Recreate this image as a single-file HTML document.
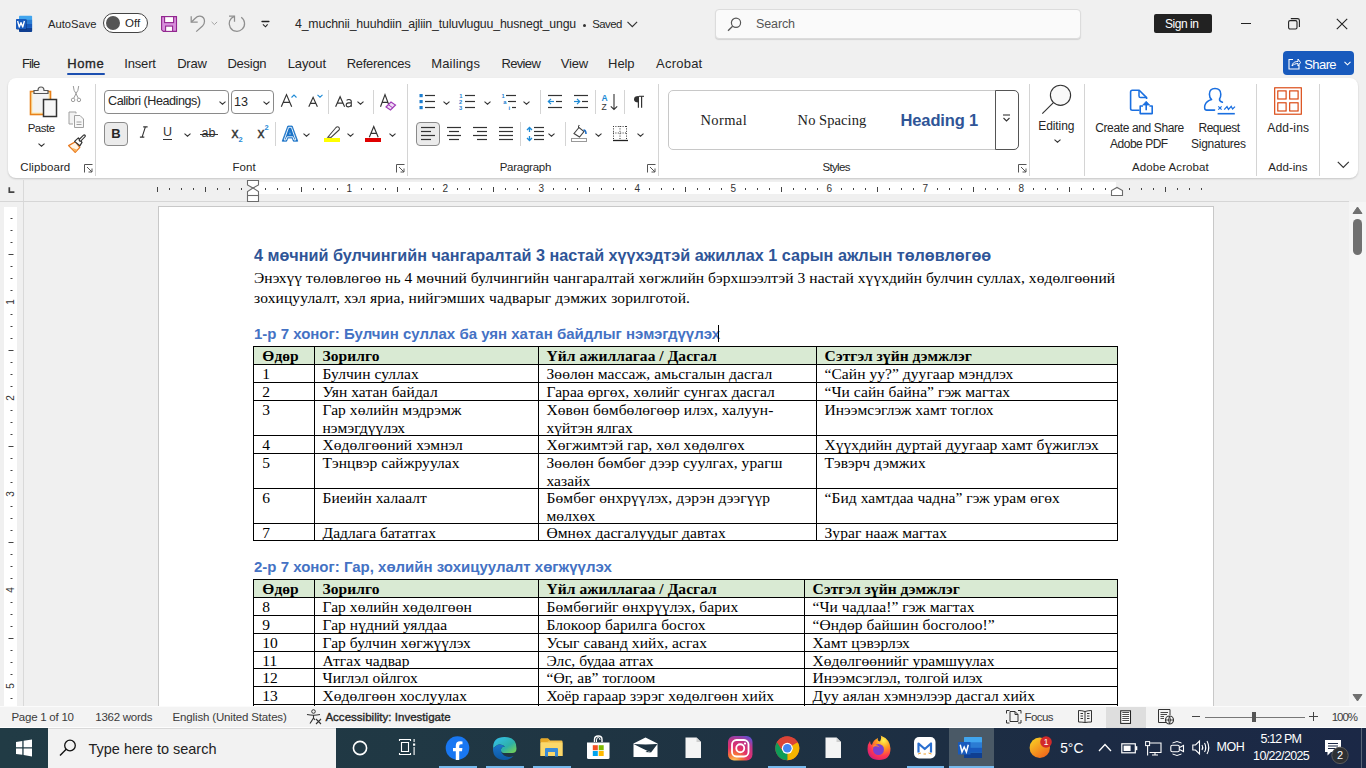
<!DOCTYPE html><html><head><meta charset="utf-8"><style>
*{margin:0;padding:0;box-sizing:border-box}
html,body{width:1366px;height:768px;overflow:hidden;background:#f0f0f0;font-family:"Liberation Sans",sans-serif}
.a{position:absolute}
.t{position:absolute;white-space:nowrap;line-height:1}
svg{position:absolute;overflow:visible}
</style></head><body>
<svg style="left:16px;top:15px" width="17" height="18" viewBox="0 0 17 18">
<rect x="3" y="0.8" width="13.1" height="16.1" rx="0.8" fill="#41a5ee"/>
<rect x="3" y="4.8" width="13.1" height="4.1" fill="#2b7cd3"/>
<rect x="3" y="8.9" width="13.1" height="4" fill="#185abd"/>
<path d="M3 12.9 H16.1 V16.1 Q16.1 16.9 15.3 16.9 H3.8 Q3 16.9 3 16.1 Z" fill="#103f91"/>
<rect x="0.6" y="4.5" width="10.4" height="10.4" fill="#0b3275" opacity="0.5"/>
<rect x="0" y="3.9" width="10" height="10.1" rx="0.6" fill="#185abd"/>
<path d="M1.6 6 L3.3 12 L5 7.6 L6.7 12 L8.4 6" stroke="#fff" stroke-width="1.35" fill="none" stroke-linejoin="round"/>
</svg>
<div class="t" style="left:48px;top:18.52px;font-size:11.2px;color:#262626;font-weight:normal;font-family:'Liberation Sans', sans-serif;letter-spacing:0.000px;">AutoSave</div>
<div class="a" style="left:103px;top:13px;width:45px;height:20px;border:1px solid #444;border-radius:10px;background:#fff"></div>
<div class="a" style="left:106px;top:16px;width:14px;height:14px;border-radius:7px;background:#555"></div>
<div class="t" style="left:125px;top:18.27px;font-size:11.5px;color:#262626;font-weight:normal;font-family:'Liberation Sans', sans-serif;letter-spacing:0.000px;">Off</div>
<svg style="left:161px;top:16px" width="17" height="17" viewBox="0 0 17 17">
<path d="M0.6 0.6 H15.5 V15.4 H2.3 L0.6 13.8 Z" fill="#d88fdc" stroke="#92278f" stroke-width="1.1"/>
<rect x="3.6" y="0.6" width="9" height="6" fill="#fff" stroke="#92278f" stroke-width="1.1"/>
<rect x="4.6" y="10.1" width="7" height="5.3" fill="#fff" stroke="#92278f" stroke-width="1.1"/>
</svg>
<svg style="left:184px;top:14px" width="36" height="20" viewBox="0 0 36 20">
<path d="M7.2 2.2 V8.2 H13.7" stroke="#8f8f8f" stroke-width="1.25" fill="none"/>
<path d="M7.5 8 L11 4.5 Q13.5 2 16 2.2 Q20.5 2.8 20.5 7.3 Q20.5 10 18.5 12 L12.2 17.6" stroke="#8f8f8f" stroke-width="1.25" fill="none"/>
<path d="M27.6 7.9 L30.4 10.6 L33.1 7.9" stroke="#9a9a9a" stroke-width="0.9" fill="none"/>
</svg>
<svg style="left:227px;top:14px" width="20" height="20" viewBox="0 0 20 20">
<path d="M7.5 7.7 V2.2 H2" stroke="#8f8f8f" stroke-width="1.25" fill="none"/>
<path d="M14.2 3.2 A7.7 7.7 0 1 1 7.3 2.3" stroke="#8f8f8f" stroke-width="1.25" fill="none"/>
</svg>
<svg style="left:260px;top:18px" width="12" height="12" viewBox="0 0 12 12">
<path d="M2 3.5 H8.9" stroke="#222" stroke-width="1.3" stroke-linecap="round"/><path d="M2.9 6.4 L5.5 8.8 L7.6 6.4" stroke="#222" stroke-width="1.1" fill="none"/>
</svg>
<div class="t" style="left:295px;top:18.29px;font-size:12.3px;color:#262626;font-weight:normal;font-family:'Liberation Sans', sans-serif;letter-spacing:-0.153px;">4_muchnii_huuhdiin_ajliin_tuluvluguu_husnegt_ungu</div>
<div class="a" style="left:582.5px;top:23.7px;width:3.5px;height:3.5px;border-radius:2px;background:#333"></div>
<div class="t" style="left:592.2px;top:19.25px;font-size:11.4px;color:#262626;font-weight:normal;font-family:'Liberation Sans', sans-serif;letter-spacing:-0.549px;">Saved</div>
<svg style="left:627px;top:21px" width="11" height="7" viewBox="0 0 11 7"><path d="M0.5 0.8 L5.3 5.6 L10.1 0.8" stroke="#333" stroke-width="1.2" fill="none"/></svg>
<div class="a" style="left:715px;top:9px;width:366px;height:30px;background:#fafafa;border:1px solid #dcdcdc;border-radius:4px;box-shadow:0 1px 1px rgba(0,0,0,0.12)"></div>
<svg style="left:727px;top:17px" width="15" height="15" viewBox="0 0 15 15"><circle cx="9" cy="5.8" r="4.6" stroke="#555" stroke-width="1.2" fill="none"/><path d="M5.6 9.2 L1 13.8" stroke="#555" stroke-width="1.3"/></svg>
<div class="t" style="left:756px;top:17.92px;font-size:12.5px;color:#555;font-weight:normal;font-family:'Liberation Sans', sans-serif;letter-spacing:-0.121px;">Search</div>
<div class="a" style="left:1154px;top:14px;width:58px;height:19px;background:#222;border-radius:2px"></div>
<div class="t" style="left:1165px;top:18.34px;font-size:12px;color:#fff;font-weight:normal;font-family:'Liberation Sans', sans-serif;letter-spacing:-0.449px;">Sign in</div>
<div class="a" style="left:1241px;top:23px;width:10px;height:1px;background:#222"></div>
<svg style="left:1288px;top:18px" width="12" height="12" viewBox="0 0 12 12"><rect x="0.6" y="2.6" width="8.4" height="8.4" rx="1.5" stroke="#222" stroke-width="1.1" fill="none"/><path d="M2.8 0.6 H9.5 Q11.4 0.6 11.4 2.5 V9" stroke="#222" stroke-width="1.1" fill="none"/></svg>
<svg style="left:1336px;top:18px" width="12" height="12" viewBox="0 0 12 12"><path d="M0.8 0.8 L11.2 11.2 M11.2 0.8 L0.8 11.2" stroke="#222" stroke-width="1.1"/></svg>
<div class="t" style="left:22px;top:56.90px;font-size:13px;color:#262626;font-weight:normal;font-family:'Liberation Sans', sans-serif;letter-spacing:-0.916px;">File</div>
<div class="t" style="left:67.3px;top:56.90px;font-size:13px;color:#262626;font-weight:normal;font-family:'Liberation Sans', sans-serif;letter-spacing:0.574px;-webkit-text-stroke:0.35px currentColor;">Home</div>
<div class="t" style="left:124.3px;top:56.90px;font-size:13px;color:#262626;font-weight:normal;font-family:'Liberation Sans', sans-serif;letter-spacing:-0.183px;">Insert</div>
<div class="t" style="left:177.2px;top:56.90px;font-size:13px;color:#262626;font-weight:normal;font-family:'Liberation Sans', sans-serif;letter-spacing:-0.212px;">Draw</div>
<div class="t" style="left:227.4px;top:56.90px;font-size:13px;color:#262626;font-weight:normal;font-family:'Liberation Sans', sans-serif;letter-spacing:-0.253px;">Design</div>
<div class="t" style="left:287.8px;top:56.90px;font-size:13px;color:#262626;font-weight:normal;font-family:'Liberation Sans', sans-serif;letter-spacing:-0.166px;">Layout</div>
<div class="t" style="left:346.7px;top:56.90px;font-size:13px;color:#262626;font-weight:normal;font-family:'Liberation Sans', sans-serif;letter-spacing:-0.275px;">References</div>
<div class="t" style="left:431.3px;top:56.90px;font-size:13px;color:#262626;font-weight:normal;font-family:'Liberation Sans', sans-serif;letter-spacing:0.131px;">Mailings</div>
<div class="t" style="left:501.4px;top:56.90px;font-size:13px;color:#262626;font-weight:normal;font-family:'Liberation Sans', sans-serif;letter-spacing:-0.645px;">Review</div>
<div class="t" style="left:560.8px;top:56.90px;font-size:13px;color:#262626;font-weight:normal;font-family:'Liberation Sans', sans-serif;letter-spacing:-0.214px;">View</div>
<div class="t" style="left:608.1px;top:56.90px;font-size:13px;color:#262626;font-weight:normal;font-family:'Liberation Sans', sans-serif;letter-spacing:-0.079px;">Help</div>
<div class="t" style="left:656.1px;top:56.90px;font-size:13px;color:#262626;font-weight:normal;font-family:'Liberation Sans', sans-serif;letter-spacing:0.216px;">Acrobat</div>
<div class="a" style="left:67px;top:73px;width:38px;height:2px;background:#1c4fb0;border-radius:1px"></div>
<div class="a" style="left:1283px;top:51px;width:71px;height:24px;background:#185abd;border-radius:4px"></div>
<svg style="left:1288px;top:57px" width="13" height="13" viewBox="0 0 13 13"><path d="M5 2.5 H1 V12 H11 V8" stroke="#fff" stroke-width="1.1" fill="none"/><path d="M4 9 C4.5 5.5 7 4.5 10 4.5 V2 L12.5 5.5 L10 9 V6.5 C7.5 6.5 5.5 7.5 4 9 Z" stroke="#fff" stroke-width="1" fill="none"/></svg>
<div class="t" style="left:1304.3px;top:57.50px;font-size:13px;color:#fff;font-weight:normal;font-family:'Liberation Sans', sans-serif;letter-spacing:-0.597px;">Share</div>
<svg style="left:1344px;top:61px" width="7" height="5" viewBox="0 0 7 5"><path d="M0.5 0.8 L3.5 3.8 L6.5 0.8" stroke="#fff" stroke-width="1.1" fill="none"/></svg>
<div class="a" style="left:8px;top:78px;width:1350px;height:100px;background:#fff;border-radius:8px;box-shadow:0 1px 2px rgba(0,0,0,0.18)"></div>
<svg style="left:29px;top:86px" width="30" height="32" viewBox="0 0 30 32">
<rect x="1.5" y="5.5" width="20" height="23" fill="#fde9b0" stroke="#e8811a" stroke-width="1.6"/>
<rect x="3.5" y="6.5" width="16" height="20" fill="#f3f3f3"/>
<path d="M5 7.5 V4.5 H9 Q9 1 12 1 Q15 1 15 4.5 H19 V7.5 Z" fill="#f3f3f3" stroke="#555" stroke-width="1.2"/>
<rect x="14.5" y="13.5" width="13" height="17" fill="#f7f7f7" stroke="#333" stroke-width="1.5"/>
</svg>
<div class="t" style="left:27.7px;top:122.87px;font-size:11.5px;color:#262626;font-weight:normal;font-family:'Liberation Sans', sans-serif;letter-spacing:-0.502px;">Paste</div>
<svg style="left:38px;top:143px" width="7" height="5" viewBox="0 0 7 5"><path d="M0.5 0.7 L3.5 3.2 L6.5 0.7" stroke="#333" stroke-width="1.1" fill="none"/></svg>
<svg style="left:0px;top:0px" width="1366" height="200" viewBox="0 0 1366 200"><path d="M73.3 86 Q73.6 91 76 93.6 L78.2 98.1 M78.7 86 Q78.4 91 76 93.6 L73.8 98.1" stroke="#9a9a9a" stroke-width="1" fill="none"/><circle cx="73.1" cy="99.9" r="1.75" stroke="#9a9a9a" stroke-width="1" fill="none"/><circle cx="78.9" cy="99.9" r="1.75" stroke="#9a9a9a" stroke-width="1" fill="none"/></svg>
<svg style="left:68px;top:111px" width="17" height="18" viewBox="0 0 17 18">
<path d="M8 2.5 V1 H1 V13 H5" stroke="#a0a0a0" stroke-width="1" fill="#f2f2f2"/>
<path d="M6.5 4.5 H12 L15.5 8 V16.5 H6.5 Z" stroke="#a0a0a0" stroke-width="1" fill="#f7f7f7"/>
<path d="M8.5 11 H13.5 M8.5 13.5 H13.5" stroke="#a0a0a0" stroke-width="1"/>
</svg>
<svg style="left:0px;top:0px" width="1366" height="200" viewBox="0 0 1366 200"><path d="M68.6 145.6 L75.4 141.8 L79.8 147.4 L75.2 152.4 Z" fill="#fff4e6" stroke="#e8761a" stroke-width="1.3" stroke-linejoin="round"/><path d="M71.2 147.6 L77.4 149.8 L75.2 152 Z" fill="#f9b25a"/><path d="M74.6 141.4 L78.4 137.9 L82 142.4 L79.8 145.8 Z" fill="#fff" stroke="#333" stroke-width="1.2" stroke-linejoin="round"/><path d="M80.2 140 L84.3 135.9" stroke="#333" stroke-width="3.2" stroke-linecap="round"/><path d="M80.4 139.8 L84.1 136.1" stroke="#fff" stroke-width="1.1" stroke-linecap="round"/></svg>
<div class="t" style="left:20.3px;top:162.07px;font-size:11.5px;color:#262626;font-weight:normal;font-family:'Liberation Sans', sans-serif;letter-spacing:0.085px;">Clipboard</div>
<svg style="left:83.5px;top:163.5px" width="9" height="9" viewBox="0 0 9 9"><path d="M0.5 8.5 V0.5 H8.5" stroke="#555" stroke-width="1" fill="none"/><path d="M3 3 L8 8 M8 4.5 V8 H4.5" stroke="#555" stroke-width="1" fill="none"/></svg>
<div class="a" style="left:95px;top:84px;width:1px;height:92px;background:#d4d4d4"></div>
<div class="a" style="left:104px;top:90px;width:125px;height:24px;border:1px solid #8a8a8a;border-radius:4px;background:#fff"></div>
<div class="t" style="left:108px;top:95.43px;font-size:12.6px;color:#262626;font-weight:normal;font-family:'Liberation Sans', sans-serif;letter-spacing:-0.458px;">Calibri (Headings)</div>
<svg style="left:219px;top:101px" width="7" height="5" viewBox="0 0 7 5"><path d="M0.5 0.7 L3.5 3.2 L6.5 0.7" stroke="#333" stroke-width="1.1" fill="none"/></svg>
<div class="a" style="left:231px;top:90px;width:43px;height:24px;border:1px solid #8a8a8a;border-radius:4px;background:#fff"></div>
<div class="t" style="left:234px;top:95.53px;font-size:12.6px;color:#262626;font-weight:normal;font-family:'Liberation Sans', sans-serif;letter-spacing:0.000px;">13</div>
<svg style="left:263px;top:101px" width="7" height="5" viewBox="0 0 7 5"><path d="M0.5 0.7 L3.5 3.2 L6.5 0.7" stroke="#333" stroke-width="1.1" fill="none"/></svg>
<svg style="left:0px;top:0px" width="1366" height="200" viewBox="0 0 1366 200"><path d="M281.30 106.80 L286.50 94.60 L291.70 106.80 M283.17 102.41 H289.83" stroke="#333" stroke-width="1.15" fill="none" stroke-linejoin="miter"/><path d="M308.80 106.80 L313.10 97.30 L317.40 106.80 M310.35 103.38 H315.85" stroke="#333" stroke-width="1.15" fill="none" stroke-linejoin="miter"/><path d="M335.60 106.80 L340.10 96.70 L344.60 106.80 M337.22 103.16 H342.98" stroke="#333" stroke-width="1.15" fill="none" stroke-linejoin="miter"/><path d="M380.50 106.80 L385.00 94.60 L389.50 106.80 M382.12 102.41 H387.88" stroke="#333" stroke-width="1.15" fill="none" stroke-linejoin="miter"/><path d="M369.30 137.30 L373.75 126.50 L378.20 137.30 M370.90 133.41 H376.60" stroke="#333" stroke-width="1.15" fill="none" stroke-linejoin="miter"/><path d="M346.6 100.3 Q347.5 99.5 349 99.5 Q351.3 99.5 351.3 101.8 V106.8 M351.3 102.9 H348.6 Q346.2 102.9 346.2 105 Q346.2 106.9 348.3 106.9 Q350.6 106.9 351.3 104.8" stroke="#333" stroke-width="1.1" fill="none"/></svg>
<svg style="left:291px;top:94px" width="7" height="4" viewBox="0 0 7 4"><path d="M0.5 3.5 L3 1 L5.5 3.5" stroke="#1e8ad6" stroke-width="1.1" fill="none"/></svg>
<svg style="left:317px;top:94px" width="7" height="4" viewBox="0 0 7 4"><path d="M0.5 0.8 L3 3.2 L5.5 0.8" stroke="#1e8ad6" stroke-width="1.1" fill="none"/></svg>
<div class="a" style="left:328px;top:90px;width:1px;height:24px;background:#d4d4d4"></div>
<svg style="left:357px;top:101px" width="7" height="5" viewBox="0 0 7 5"><path d="M0.5 0.7 L3.5 3.2 L6.5 0.7" stroke="#333" stroke-width="1.1" fill="none"/></svg>
<div class="a" style="left:373px;top:90px;width:1px;height:24px;background:#d4d4d4"></div>
<svg style="left:385px;top:100px" width="12" height="11" viewBox="0 0 12 11"><path d="M1 7 L6 2 L10.5 5 L5.5 10 Z" stroke="#a03cb8" stroke-width="1.2" fill="#f0dcf5"/><path d="M3.3 4.7 L8 8" stroke="#a03cb8" stroke-width="1"/></svg>
<div class="a" style="left:104px;top:122px;width:24px;height:24px;border:1px solid #8a8a8a;border-radius:4px;background:#ebebeb"></div>
<div class="t" style="left:111.3px;top:127.00px;font-size:13px;color:#262626;font-weight:bold;font-family:'Liberation Sans', sans-serif;letter-spacing:0.000px;">B</div>
<svg style="left:0px;top:0px" width="1366" height="200" viewBox="0 0 1366 200"><path d="M143.2 126.9 H147.6 M139.9 137.1 H144.3 M145.4 126.9 L142.1 137.1" stroke="#333" stroke-width="1.1" fill="none"/></svg>
<div class="t" style="left:163px;top:126.42px;font-size:12.5px;color:#333;font-weight:normal;font-family:'Liberation Sans', sans-serif;letter-spacing:0.000px;">U</div>
<div class="a" style="left:163px;top:139px;width:9px;height:1px;background:#333"></div>
<svg style="left:184px;top:133px" width="7" height="5" viewBox="0 0 7 5"><path d="M0.5 0.7 L3.5 3.2 L6.5 0.7" stroke="#333" stroke-width="1.1" fill="none"/></svg>
<div class="t" style="left:201.5px;top:126.92px;font-size:12.5px;color:#333;font-weight:normal;font-family:'Liberation Sans', sans-serif;letter-spacing:0.000px;">ab</div>
<div class="a" style="left:200px;top:134px;width:18px;height:1px;background:#333"></div>
<div class="t" style="left:231.5px;top:125.65px;font-size:14px;color:#333;font-weight:normal;font-family:'Liberation Sans', sans-serif;letter-spacing:0.000px;-webkit-text-stroke:0.35px currentColor;">x</div>
<div class="t" style="left:238.5px;top:135.65px;font-size:7.5px;color:#1e8ad6;font-weight:bold;font-family:'Liberation Sans', sans-serif;letter-spacing:0.000px;">2</div>
<div class="t" style="left:257.5px;top:125.65px;font-size:14px;color:#333;font-weight:normal;font-family:'Liberation Sans', sans-serif;letter-spacing:0.000px;-webkit-text-stroke:0.35px currentColor;">x</div>
<div class="t" style="left:264.5px;top:123.65px;font-size:7.5px;color:#1e8ad6;font-weight:bold;font-family:'Liberation Sans', sans-serif;letter-spacing:0.000px;">2</div>
<div class="a" style="left:275px;top:122px;width:1px;height:24px;background:#d4d4d4"></div>
<svg style="left:281px;top:125px" width="18" height="18" viewBox="0 0 18 18"><path d="M1.2 16.2 L6.8 1 H11.2 L16.8 16.2 H12.3 L11.2 13 H6.8 L5.7 16.2 Z M7.8 9.8 H10.2 L9 6 Z" fill="#1a73c8" stroke="#1a73c8" stroke-width="0.8" stroke-linejoin="round"/><path d="M3.2 15 L7.6 2.3 H10.4 L14.8 15 H13 L11.9 11.8 H6.1 L5 15 Z" fill="none" stroke="#fff" stroke-width="0.9" stroke-linejoin="round"/></svg>
<svg style="left:303px;top:133px" width="7" height="5" viewBox="0 0 7 5"><path d="M0.5 0.7 L3.5 3.2 L6.5 0.7" stroke="#333" stroke-width="1.1" fill="none"/></svg>
<svg style="left:324px;top:125px" width="18" height="18" viewBox="0 0 18 18"><path d="M4 12 L12 2.5 Q13.5 1 15 2.5 Q16 4 15 5 L7 12.5 Z" fill="#fff" stroke="#444" stroke-width="1.1"/><path d="M4 12 L2.5 13 L5 13.5 L7 12.5 Z" fill="#666"/><rect x="0" y="13" width="16" height="4" fill="#ffff00"/></svg>
<svg style="left:347px;top:133px" width="7" height="5" viewBox="0 0 7 5"><path d="M0.5 0.7 L3.5 3.2 L6.5 0.7" stroke="#333" stroke-width="1.1" fill="none"/></svg>
<div class="a" style="left:365px;top:138px;width:16px;height:4px;background:#e00000"></div>
<svg style="left:389px;top:133px" width="7" height="5" viewBox="0 0 7 5"><path d="M0.5 0.7 L3.5 3.2 L6.5 0.7" stroke="#333" stroke-width="1.1" fill="none"/></svg>
<div class="t" style="left:232.5px;top:162.07px;font-size:11.5px;color:#262626;font-weight:normal;font-family:'Liberation Sans', sans-serif;letter-spacing:0.096px;">Font</div>
<svg style="left:395.5px;top:163.5px" width="9" height="9" viewBox="0 0 9 9"><path d="M0.5 8.5 V0.5 H8.5" stroke="#555" stroke-width="1" fill="none"/><path d="M3 3 L8 8 M8 4.5 V8 H4.5" stroke="#555" stroke-width="1" fill="none"/></svg>
<div class="a" style="left:407px;top:84px;width:1px;height:92px;background:#d4d4d4"></div>
<svg style="left:419px;top:93px" width="18" height="18" viewBox="0 0 18 18"><rect x="0.5" y="1" width="3.2" height="3.2" fill="#1e7fd0"/><rect x="0.5" y="7" width="3.2" height="3.2" fill="#1e7fd0"/><rect x="0.5" y="13" width="3.2" height="3.2" fill="#1e7fd0"/><path d="M6 2.5 H16" stroke="#333" stroke-width="1.2"/><path d="M6 8.5 H16" stroke="#333" stroke-width="1.2"/><path d="M6 14.5 H16" stroke="#333" stroke-width="1.2"/></svg>
<svg style="left:443px;top:101px" width="7" height="5" viewBox="0 0 7 5"><path d="M0.5 0.7 L3.5 3.2 L6.5 0.7" stroke="#333" stroke-width="1.1" fill="none"/></svg>
<svg style="left:459px;top:93px" width="18" height="18" viewBox="0 0 18 18"><text x="0.3" y="5.3" font-size="5.8" font-weight="bold" fill="#1e7fd0" font-family="Liberation Sans">1</text><text x="0" y="11.3" font-size="5.8" font-weight="bold" fill="#1e7fd0" font-family="Liberation Sans">2</text><text x="0" y="17.3" font-size="5.8" font-weight="bold" fill="#1e7fd0" font-family="Liberation Sans">3</text><path d="M6 2.5 H16" stroke="#333" stroke-width="1.2"/><path d="M6 8.5 H16" stroke="#333" stroke-width="1.2"/><path d="M6 14.5 H16" stroke="#333" stroke-width="1.2"/></svg>
<svg style="left:484px;top:101px" width="7" height="5" viewBox="0 0 7 5"><path d="M0.5 0.7 L3.5 3.2 L6.5 0.7" stroke="#333" stroke-width="1.1" fill="none"/></svg>
<svg style="left:500px;top:93px" width="18" height="18" viewBox="0 0 18 18"><text x="1.5" y="5.3" font-size="5.8" font-weight="bold" fill="#1e7fd0" font-family="Liberation Sans">1</text><text x="3.2" y="11.3" font-size="5.8" font-weight="bold" fill="#1e7fd0" font-family="Liberation Sans">a</text><text x="8.5" y="17.3" font-size="5.8" font-weight="bold" fill="#1e7fd0" font-family="Liberation Sans">i</text><path d="M6 2.5 H16" stroke="#333" stroke-width="1.2"/><path d="M8 8.5 H16" stroke="#333" stroke-width="1.2"/><path d="M12 14.5 H16" stroke="#333" stroke-width="1.2"/></svg>
<svg style="left:523px;top:101px" width="7" height="5" viewBox="0 0 7 5"><path d="M0.5 0.7 L3.5 3.2 L6.5 0.7" stroke="#333" stroke-width="1.1" fill="none"/></svg>
<div class="a" style="left:540px;top:90px;width:1px;height:24px;background:#d4d4d4"></div>
<svg style="left:547px;top:93px" width="17" height="17" viewBox="0 0 17 17"><path d="M1 2.5 H15" stroke="#333" stroke-width="1.2"/><path d="M9 8.5 H15" stroke="#333" stroke-width="1.2"/><path d="M1 14.5 H15" stroke="#333" stroke-width="1.2"/><path d="M1.5 8.5 H7" stroke="#1e8ad6" stroke-width="1.2"/><path d="M4 5.8 L1.3 8.5 L4 11.2" stroke="#1e8ad6" stroke-width="1.2" fill="none"/></svg>
<svg style="left:573px;top:93px" width="17" height="17" viewBox="0 0 17 17"><path d="M1 2.5 H15" stroke="#333" stroke-width="1.2"/><path d="M9 8.5 H15" stroke="#333" stroke-width="1.2"/><path d="M1 14.5 H15" stroke="#333" stroke-width="1.2"/><path d="M1 8.5 H6.5" stroke="#1e8ad6" stroke-width="1.2"/><path d="M4 5.8 L6.7 8.5 L4 11.2" stroke="#1e8ad6" stroke-width="1.2" fill="none"/></svg>
<div class="a" style="left:595px;top:90px;width:1px;height:24px;background:#d4d4d4"></div>
<svg style="left:601px;top:93px" width="18" height="18" viewBox="0 0 18 18"><text x="0.5" y="8.3" font-size="8.5" font-weight="bold" fill="#1e8ad6" font-family="Liberation Sans">A</text><text x="0.5" y="17" font-size="8.5" fill="#333" font-family="Liberation Sans">Z</text><path d="M13 1 V16.5 M9.8 13.3 L13 16.5 L16.2 13.3" stroke="#333" stroke-width="1.1" fill="none"/></svg>
<div class="a" style="left:624px;top:90px;width:1px;height:24px;background:#d4d4d4"></div>
<svg style="left:633px;top:95px" width="12" height="14" viewBox="0 0 12 14"><path d="M6 1.3 H11" stroke="#333" stroke-width="1.1"/><path d="M5.4 1.3 V12.8 M8.6 1.3 V12.8" stroke="#333" stroke-width="1.2"/><path d="M5.6 1 Q1 1 1 4.3 Q1 7.6 5.6 7.6 Z" fill="#333"/></svg>
<div class="a" style="left:416px;top:122px;width:24px;height:24px;border:1px solid #8a8a8a;border-radius:4px;background:#ebebeb"></div>
<svg style="left:420px;top:126px" width="17" height="16" viewBox="0 0 17 16"><path d="M1 1.5 H15" stroke="#333" stroke-width="1.2"/><path d="M1 5.5 H11" stroke="#333" stroke-width="1.2"/><path d="M1 9.5 H15" stroke="#333" stroke-width="1.2"/><path d="M1 13.5 H11" stroke="#333" stroke-width="1.2"/></svg>
<svg style="left:446px;top:126px" width="17" height="16" viewBox="0 0 17 16"><path d="M1 1.5 H15" stroke="#333" stroke-width="1.2"/><path d="M3 5.5 H13" stroke="#333" stroke-width="1.2"/><path d="M1 9.5 H15" stroke="#333" stroke-width="1.2"/><path d="M3 13.5 H13" stroke="#333" stroke-width="1.2"/></svg>
<svg style="left:472px;top:126px" width="17" height="16" viewBox="0 0 17 16"><path d="M1 1.5 H15" stroke="#333" stroke-width="1.2"/><path d="M5 5.5 H15" stroke="#333" stroke-width="1.2"/><path d="M1 9.5 H15" stroke="#333" stroke-width="1.2"/><path d="M5 13.5 H15" stroke="#333" stroke-width="1.2"/></svg>
<svg style="left:498px;top:126px" width="17" height="16" viewBox="0 0 17 16"><path d="M1 1.5 H15" stroke="#333" stroke-width="1.2"/><path d="M1 5.5 H15" stroke="#333" stroke-width="1.2"/><path d="M1 9.5 H15" stroke="#333" stroke-width="1.2"/><path d="M1 13.5 H15" stroke="#333" stroke-width="1.2"/></svg>
<div class="a" style="left:520px;top:122px;width:1px;height:24px;background:#d4d4d4"></div>
<svg style="left:526px;top:126px" width="19" height="16" viewBox="0 0 19 16"><path d="M8 1.5 H18" stroke="#333" stroke-width="1.2"/><path d="M8 5.5 H18" stroke="#333" stroke-width="1.2"/><path d="M8 9.5 H18" stroke="#333" stroke-width="1.2"/><path d="M8 13.5 H18" stroke="#333" stroke-width="1.2"/><path d="M3.5 1.5 V6 M3.5 10 V14.5 M1 4 L3.5 1.5 L6 4 M1 12 L3.5 14.5 L6 12" stroke="#1e8ad6" stroke-width="1.3" fill="none"/></svg>
<svg style="left:548.3px;top:133px" width="7" height="5" viewBox="0 0 7 5"><path d="M0.5 0.7 L3.5 3.2 L6.5 0.7" stroke="#333" stroke-width="1.1" fill="none"/></svg>
<div class="a" style="left:565px;top:122px;width:1px;height:24px;background:#d4d4d4"></div>
<svg style="left:571px;top:125px" width="18" height="18" viewBox="0 0 18 18"><path d="M3 8.5 L8 2.5 L13 6.5 L8.5 12 Z" stroke="#444" stroke-width="1.1" fill="#fff"/><path d="M7.5 3 V1 Q7.5 0 8.5 0.5" stroke="#444" stroke-width="1" fill="none"/><path d="M12.5 5 Q15 5 15 9" stroke="#1e6fc8" stroke-width="1.6" fill="none"/><rect x="0.5" y="13.5" width="15" height="3" stroke="#999" stroke-width="1" fill="#fff"/></svg>
<svg style="left:595px;top:133px" width="7" height="5" viewBox="0 0 7 5"><path d="M0.5 0.7 L3.5 3.2 L6.5 0.7" stroke="#333" stroke-width="1.1" fill="none"/></svg>
<svg style="left:612px;top:125px" width="17" height="17" viewBox="0 0 17 17"><path d="M1 1.5 H15 M1 8 H15 M1.5 1 V15 M8 1 V15 M14.5 1 V15" stroke="#333" stroke-width="1" stroke-dasharray="1 1.4" fill="none"/><path d="M1 15.5 H16" stroke="#222" stroke-width="1.3"/></svg>
<svg style="left:637px;top:133px" width="7" height="5" viewBox="0 0 7 5"><path d="M0.5 0.7 L3.5 3.2 L6.5 0.7" stroke="#333" stroke-width="1.1" fill="none"/></svg>
<div class="t" style="left:499.7px;top:162.07px;font-size:11.5px;color:#262626;font-weight:normal;font-family:'Liberation Sans', sans-serif;letter-spacing:-0.263px;">Paragraph</div>
<svg style="left:646.5px;top:163.5px" width="9" height="9" viewBox="0 0 9 9"><path d="M0.5 8.5 V0.5 H8.5" stroke="#555" stroke-width="1" fill="none"/><path d="M3 3 L8 8 M8 4.5 V8 H4.5" stroke="#555" stroke-width="1" fill="none"/></svg>
<div class="a" style="left:658px;top:84px;width:1px;height:92px;background:#d4d4d4"></div>
<div class="a" style="left:668px;top:90px;width:351px;height:60px;border:1px solid #c8c8c8;border-radius:5px;background:#fff"></div>
<div class="a" style="left:995px;top:90px;width:24px;height:60px;border:1px solid #555;border-radius:0 5px 5px 0;background:#fff"></div>
<svg style="left:1002px;top:114px" width="10" height="9" viewBox="0 0 10 9"><path d="M1 1 H8" stroke="#333" stroke-width="1.1"/><path d="M1.5 4 L4.5 7 L7.5 4" stroke="#333" stroke-width="1.1" fill="none"/></svg>
<div class="t" style="left:700.4px;top:113.26px;font-size:14.5px;color:#222;font-weight:normal;font-family:'Liberation Serif', serif;letter-spacing:0.401px;">Normal</div>
<div class="t" style="left:797.6px;top:113.26px;font-size:14.5px;color:#222;font-weight:normal;font-family:'Liberation Serif', serif;letter-spacing:0.060px;">No Spacing</div>
<div class="t" style="left:900.6px;top:112.03px;font-size:16.5px;color:#2f5597;font-weight:bold;font-family:'Liberation Sans', sans-serif;letter-spacing:-0.156px;">Heading 1</div>
<div class="t" style="left:822.5px;top:162.07px;font-size:11.5px;color:#262626;font-weight:normal;font-family:'Liberation Sans', sans-serif;letter-spacing:-0.683px;">Styles</div>
<svg style="left:1017.5px;top:163.5px" width="9" height="9" viewBox="0 0 9 9"><path d="M0.5 8.5 V0.5 H8.5" stroke="#555" stroke-width="1" fill="none"/><path d="M3 3 L8 8 M8 4.5 V8 H4.5" stroke="#555" stroke-width="1" fill="none"/></svg>
<div class="a" style="left:1029px;top:84px;width:1px;height:92px;background:#d4d4d4"></div>
<svg style="left:1040px;top:84px" width="34" height="32" viewBox="0 0 34 32"><circle cx="20.5" cy="11.3" r="10.1" stroke="#333" stroke-width="1.15" fill="#f9f9f9"/><path d="M13.4 18.6 L2.3 29.6" stroke="#333" stroke-width="1.15"/></svg>
<div class="t" style="left:1038.2px;top:119.94px;font-size:12px;color:#262626;font-weight:normal;font-family:'Liberation Sans', sans-serif;letter-spacing:-0.065px;">Editing</div>
<svg style="left:1054px;top:139px" width="7" height="5" viewBox="0 0 7 5"><path d="M0.5 0.7 L3.5 3.2 L6.5 0.7" stroke="#333" stroke-width="1.1" fill="none"/></svg>
<div class="a" style="left:1084px;top:84px;width:1px;height:92px;background:#d4d4d4"></div>
<svg style="left:0px;top:0px" width="1366" height="200" viewBox="0 0 1366 200"><path d="M1139.5 110.2 H1132.3 Q1130.6 110.2 1130.6 108.5 V91.9 Q1130.6 90.2 1132.3 90.2 H1139.2 L1146.6 97.6 V99" stroke="#1a6fe0" stroke-width="1.6" fill="none" stroke-linejoin="round"/><path d="M1139 90.6 V96 Q1139 97.6 1140.6 97.6 H1146.4" stroke="#1a6fe0" stroke-width="1.5" fill="none"/><path d="M1143 106 H1140.2 V113.6 H1152.2 V106 H1149.4" stroke="#1a6fe0" stroke-width="1.6" fill="none" stroke-linejoin="round"/><path d="M1146.2 110.2 V104" stroke="#1a6fe0" stroke-width="1.6"/><path d="M1142.8 105 L1146.2 101.3 L1149.6 105 Z" fill="#1a6fe0" stroke="#1a6fe0" stroke-width="0.8" stroke-linejoin="round"/></svg>
<div class="t" style="left:1095.2px;top:122.34px;font-size:12px;color:#262626;font-weight:normal;font-family:'Liberation Sans', sans-serif;letter-spacing:-0.375px;">Create and Share</div>
<div class="t" style="left:1110px;top:137.64px;font-size:12px;color:#262626;font-weight:normal;font-family:'Liberation Sans', sans-serif;letter-spacing:-0.479px;">Adobe PDF</div>
<svg style="left:0px;top:0px" width="1366" height="200" viewBox="0 0 1366 200"><path d="M1222.4 102.3 Q1219 101.2 1219.6 98.8 Q1220.8 97 1220.8 94.2 Q1220.8 88.4 1215 88.4 Q1209.4 88.4 1209.4 94.2 Q1209.4 97.6 1211.6 99.6 Q1206.5 101 1204.9 105.2 Q1203.8 110.1 1206.6 110.1 H1214.6" stroke="#1a6fe0" stroke-width="1.55" fill="none" stroke-linejoin="round" stroke-linecap="round"/><path d="M1218.3 106.4 L1221.6 109.7 M1221.6 106.4 L1218.3 109.7" stroke="#1a6fe0" stroke-width="1.2"/><path d="M1224.2 109.6 L1227 106.6 L1228.5 109.4 L1231.2 106.4 L1232.6 109 L1235 106.6" stroke="#1a6fe0" stroke-width="1.25" fill="none"/><path d="M1217.6 113.7 H1234.8" stroke="#1a6fe0" stroke-width="1.6"/></svg>
<div class="t" style="left:1198.5px;top:122.34px;font-size:12px;color:#262626;font-weight:normal;font-family:'Liberation Sans', sans-serif;letter-spacing:-0.533px;">Request</div>
<div class="t" style="left:1191px;top:137.64px;font-size:12px;color:#262626;font-weight:normal;font-family:'Liberation Sans', sans-serif;letter-spacing:-0.263px;">Signatures</div>
<div class="t" style="left:1132px;top:162.07px;font-size:11.5px;color:#262626;font-weight:normal;font-family:'Liberation Sans', sans-serif;letter-spacing:0.113px;">Adobe Acrobat</div>
<div class="a" style="left:1256px;top:84px;width:1px;height:92px;background:#d4d4d4"></div>
<svg style="left:0px;top:0px" width="1366" height="200" viewBox="0 0 1366 200"><rect x="1274.7" y="87.8" width="26.6" height="26.4" stroke="#d83b01" stroke-width="1.1" fill="none"/><rect x="1277.8" y="90.9" width="8.3" height="8.1" stroke="#d83b01" stroke-width="1.1" fill="none"/><rect x="1289.7" y="90.9" width="8.4" height="8.1" stroke="#d83b01" stroke-width="1.1" fill="none"/><rect x="1277.8" y="102.8" width="8.3" height="8.2" stroke="#d83b01" stroke-width="1.1" fill="none"/><rect x="1289.7" y="102.8" width="8.4" height="8.2" stroke="#d83b01" stroke-width="1.1" fill="none"/></svg>
<div class="t" style="left:1267.3px;top:122.34px;font-size:12px;color:#262626;font-weight:normal;font-family:'Liberation Sans', sans-serif;letter-spacing:0.169px;">Add-ins</div>
<div class="t" style="left:1268.2px;top:162.07px;font-size:11.5px;color:#262626;font-weight:normal;font-family:'Liberation Sans', sans-serif;letter-spacing:0.068px;">Add-ins</div>
<div class="a" style="left:1319px;top:84px;width:1px;height:92px;background:#d4d4d4"></div>
<svg style="left:1337px;top:161px" width="13" height="8" viewBox="0 0 13 8"><path d="M0.8 0.8 L6.3 6.3 L11.8 0.8" stroke="#333" stroke-width="1.2" fill="none"/></svg>
<div class="a" style="left:23px;top:180px;width:1px;height:527px;background:#d9d9d9"></div>
<div class="a" style="left:0;top:201px;width:1349px;height:1px;background:#d6d6d6"></div>
<div class="a" style="left:253px;top:182px;width:863px;height:12px;background:#fff"></div>
<svg style="left:8px;top:186px" width="8" height="8" viewBox="0 0 8 8"><path d="M1.3 1.3 V6.2 H6.4" stroke="#444" stroke-width="1.7" fill="none"/></svg>
<svg style="left:0;top:0" width="1366" height="210" viewBox="0 0 1366 210"><rect x="157" y="187" width="1" height="5" fill="#444"/><rect x="169" y="188" width="1" height="2" fill="#444"/><rect x="181" y="188" width="1" height="2" fill="#444"/><rect x="193" y="188" width="1" height="2" fill="#444"/><rect x="205" y="187" width="1" height="5" fill="#444"/><rect x="217" y="188" width="1" height="2" fill="#444"/><rect x="229" y="188" width="1" height="2" fill="#444"/><rect x="241" y="188" width="1" height="2" fill="#444"/><rect x="265" y="188" width="1" height="2" fill="#444"/><rect x="277" y="188" width="1" height="2" fill="#444"/><rect x="289" y="188" width="1" height="2" fill="#444"/><rect x="301" y="187" width="1" height="5" fill="#444"/><rect x="313" y="188" width="1" height="2" fill="#444"/><rect x="325" y="188" width="1" height="2" fill="#444"/><rect x="337" y="188" width="1" height="2" fill="#444"/><text x="349.3" y="192.3" font-size="10" fill="#333" text-anchor="middle" font-family="Liberation Sans">1</text><rect x="361" y="188" width="1" height="2" fill="#444"/><rect x="373" y="188" width="1" height="2" fill="#444"/><rect x="385" y="188" width="1" height="2" fill="#444"/><rect x="397" y="187" width="1" height="5" fill="#444"/><rect x="409" y="188" width="1" height="2" fill="#444"/><rect x="421" y="188" width="1" height="2" fill="#444"/><rect x="433" y="188" width="1" height="2" fill="#444"/><text x="445.3" y="192.3" font-size="10" fill="#333" text-anchor="middle" font-family="Liberation Sans">2</text><rect x="457" y="188" width="1" height="2" fill="#444"/><rect x="469" y="188" width="1" height="2" fill="#444"/><rect x="481" y="188" width="1" height="2" fill="#444"/><rect x="493" y="187" width="1" height="5" fill="#444"/><rect x="505" y="188" width="1" height="2" fill="#444"/><rect x="517" y="188" width="1" height="2" fill="#444"/><rect x="529" y="188" width="1" height="2" fill="#444"/><text x="541.3" y="192.3" font-size="10" fill="#333" text-anchor="middle" font-family="Liberation Sans">3</text><rect x="553" y="188" width="1" height="2" fill="#444"/><rect x="565" y="188" width="1" height="2" fill="#444"/><rect x="577" y="188" width="1" height="2" fill="#444"/><rect x="589" y="187" width="1" height="5" fill="#444"/><rect x="601" y="188" width="1" height="2" fill="#444"/><rect x="613" y="188" width="1" height="2" fill="#444"/><rect x="625" y="188" width="1" height="2" fill="#444"/><text x="637.3" y="192.3" font-size="10" fill="#333" text-anchor="middle" font-family="Liberation Sans">4</text><rect x="649" y="188" width="1" height="2" fill="#444"/><rect x="661" y="188" width="1" height="2" fill="#444"/><rect x="673" y="188" width="1" height="2" fill="#444"/><rect x="685" y="187" width="1" height="5" fill="#444"/><rect x="697" y="188" width="1" height="2" fill="#444"/><rect x="709" y="188" width="1" height="2" fill="#444"/><rect x="721" y="188" width="1" height="2" fill="#444"/><text x="733.3" y="192.3" font-size="10" fill="#333" text-anchor="middle" font-family="Liberation Sans">5</text><rect x="745" y="188" width="1" height="2" fill="#444"/><rect x="757" y="188" width="1" height="2" fill="#444"/><rect x="769" y="188" width="1" height="2" fill="#444"/><rect x="781" y="187" width="1" height="5" fill="#444"/><rect x="793" y="188" width="1" height="2" fill="#444"/><rect x="805" y="188" width="1" height="2" fill="#444"/><rect x="817" y="188" width="1" height="2" fill="#444"/><text x="829.3" y="192.3" font-size="10" fill="#333" text-anchor="middle" font-family="Liberation Sans">6</text><rect x="841" y="188" width="1" height="2" fill="#444"/><rect x="853" y="188" width="1" height="2" fill="#444"/><rect x="865" y="188" width="1" height="2" fill="#444"/><rect x="877" y="187" width="1" height="5" fill="#444"/><rect x="889" y="188" width="1" height="2" fill="#444"/><rect x="901" y="188" width="1" height="2" fill="#444"/><rect x="913" y="188" width="1" height="2" fill="#444"/><text x="925.3" y="192.3" font-size="10" fill="#333" text-anchor="middle" font-family="Liberation Sans">7</text><rect x="937" y="188" width="1" height="2" fill="#444"/><rect x="949" y="188" width="1" height="2" fill="#444"/><rect x="961" y="188" width="1" height="2" fill="#444"/><rect x="973" y="187" width="1" height="5" fill="#444"/><rect x="985" y="188" width="1" height="2" fill="#444"/><rect x="997" y="188" width="1" height="2" fill="#444"/><rect x="1009" y="188" width="1" height="2" fill="#444"/><text x="1021.3" y="192.3" font-size="10" fill="#333" text-anchor="middle" font-family="Liberation Sans">8</text><rect x="1033" y="188" width="1" height="2" fill="#444"/><rect x="1045" y="188" width="1" height="2" fill="#444"/><rect x="1057" y="188" width="1" height="2" fill="#444"/><rect x="1069" y="187" width="1" height="5" fill="#444"/><rect x="1081" y="188" width="1" height="2" fill="#444"/><rect x="1093" y="188" width="1" height="2" fill="#444"/><rect x="1105" y="188" width="1" height="2" fill="#444"/><rect x="1129" y="188" width="1" height="2" fill="#444"/><rect x="1141" y="188" width="1" height="2" fill="#444"/><rect x="1153" y="188" width="1" height="2" fill="#444"/><rect x="1165" y="187" width="1" height="5" fill="#444"/><rect x="1177" y="188" width="1" height="2" fill="#444"/><rect x="1189" y="188" width="1" height="2" fill="#444"/><rect x="1201" y="188" width="1" height="2" fill="#444"/></svg>
<svg style="left:246px;top:179px" width="14" height="24" viewBox="0 0 14 24"><path d="M1.5 1.5 H12.5 V6 L7 9 L1.5 6 Z" fill="#fff" stroke="#6b6b6b" stroke-width="1.1"/><path d="M7 9 L1.5 12.5 V22.5 H12.5 V12.5 Z" fill="#fff" stroke="#6b6b6b" stroke-width="1.1"/><path d="M1.5 16.5 H12.5" stroke="#6b6b6b" stroke-width="1.1"/></svg>
<svg style="left:1110px;top:186px" width="14" height="11" viewBox="0 0 14 11"><path d="M1.5 9.5 V4.5 L7 1.5 L12.5 4.5 V9.5 Z" fill="#fff" stroke="#6b6b6b" stroke-width="1.1"/></svg>
<div class="a" style="left:158px;top:206px;width:1056px;height:520px;background:#fff;border:1px solid #c8c8c8"></div>
<div class="t" style="left:254px;top:247.29px;font-size:16.2px;color:#2f5597;font-weight:bold;font-family:'Liberation Sans', sans-serif;letter-spacing:0.000px;">4 мөчний булчингийн чангаралтай 3 настай хүүхэдтэй ажиллах 1 сарын ажлын төлөвлөгөө</div>
<div class="t" style="left:254px;top:269.77px;font-size:15.5px;color:#000;font-weight:normal;font-family:'Liberation Serif', serif;letter-spacing:0.060px;">Энэхүү төлөвлөгөө нь 4 мөчний булчингийн чангаралтай хөгжлийн бэрхшээлтэй 3 настай хүүхдийн булчин суллах, хөдөлгөөний</div>
<div class="t" style="left:254px;top:289.72px;font-size:15.5px;color:#000;font-weight:normal;font-family:'Liberation Serif', serif;letter-spacing:0.120px;">зохицуулалт, хэл яриа, нийгэмших чадварыг дэмжих зорилготой.</div>
<div class="t" style="left:254px;top:326.30px;font-size:15px;color:#4472c4;font-weight:bold;font-family:'Liberation Sans', sans-serif;letter-spacing:0.000px;">1-р 7 хоног: Булчин суллах ба уян хатан байдлыг нэмэгдүүлэх</div>
<div class="a" style="left:718px;top:325px;width:1px;height:17px;background:#000"></div>
<div class="t" style="left:254px;top:559.30px;font-size:15px;color:#4472c4;font-weight:bold;font-family:'Liberation Sans', sans-serif;letter-spacing:0.000px;">2-р 7 хоног: Гар, хөлийн зохицуулалт хөгжүүлэх</div>
<div class="a" style="left:253px;top:346px;width:864px;height:18px;background:#d9ead3"></div>
<div class="a" style="left:253px;top:346px;width:865px;height:1px;background:#000"></div>
<div class="a" style="left:253px;top:364px;width:865px;height:1px;background:#000"></div>
<div class="a" style="left:253px;top:382px;width:865px;height:1px;background:#000"></div>
<div class="a" style="left:253px;top:400px;width:865px;height:1px;background:#000"></div>
<div class="a" style="left:253px;top:435px;width:865px;height:1px;background:#000"></div>
<div class="a" style="left:253px;top:453px;width:865px;height:1px;background:#000"></div>
<div class="a" style="left:253px;top:488px;width:865px;height:1px;background:#000"></div>
<div class="a" style="left:253px;top:523px;width:865px;height:1px;background:#000"></div>
<div class="a" style="left:253px;top:540px;width:865px;height:1px;background:#000"></div>
<div class="a" style="left:253px;top:346px;width:1px;height:194px;background:#000"></div>
<div class="a" style="left:314px;top:346px;width:1px;height:194px;background:#000"></div>
<div class="a" style="left:538px;top:346px;width:1px;height:194px;background:#000"></div>
<div class="a" style="left:816px;top:346px;width:1px;height:194px;background:#000"></div>
<div class="a" style="left:1117px;top:346px;width:1px;height:194px;background:#000"></div>
<div class="t" style="left:262.3px;top:347.92px;font-size:15.5px;color:#000;font-weight:bold;font-family:'Liberation Serif', serif;letter-spacing:0.050px;">Өдөр</div>
<div class="t" style="left:322.5px;top:347.92px;font-size:15.5px;color:#000;font-weight:bold;font-family:'Liberation Serif', serif;letter-spacing:0.050px;">Зорилго</div>
<div class="t" style="left:546.5px;top:347.92px;font-size:15.5px;color:#000;font-weight:bold;font-family:'Liberation Serif', serif;letter-spacing:0.050px;">Үйл ажиллагаа / Дасгал</div>
<div class="t" style="left:824.5px;top:347.92px;font-size:15.5px;color:#000;font-weight:bold;font-family:'Liberation Serif', serif;letter-spacing:0.050px;">Сэтгэл зүйн дэмжлэг</div>
<div class="t" style="left:262.3px;top:366.12px;font-size:15.5px;color:#000;font-weight:normal;font-family:'Liberation Serif', serif;letter-spacing:0.060px;">1</div>
<div class="t" style="left:322.5px;top:366.12px;font-size:15.5px;color:#000;font-weight:normal;font-family:'Liberation Serif', serif;letter-spacing:0.060px;">Булчин суллах</div>
<div class="t" style="left:546.5px;top:366.12px;font-size:15.5px;color:#000;font-weight:normal;font-family:'Liberation Serif', serif;letter-spacing:0.060px;">Зөөлөн массаж, амьсгалын дасгал</div>
<div class="t" style="left:824.5px;top:366.12px;font-size:15.5px;color:#000;font-weight:normal;font-family:'Liberation Serif', serif;letter-spacing:0.060px;">“Сайн уу?” дуугаар мэндлэх</div>
<div class="t" style="left:262.3px;top:384.12px;font-size:15.5px;color:#000;font-weight:normal;font-family:'Liberation Serif', serif;letter-spacing:0.060px;">2</div>
<div class="t" style="left:322.5px;top:384.12px;font-size:15.5px;color:#000;font-weight:normal;font-family:'Liberation Serif', serif;letter-spacing:0.060px;">Уян хатан байдал</div>
<div class="t" style="left:546.5px;top:384.12px;font-size:15.5px;color:#000;font-weight:normal;font-family:'Liberation Serif', serif;letter-spacing:0.060px;">Гараа өргөх, хөлийг сунгах дасгал</div>
<div class="t" style="left:824.5px;top:384.12px;font-size:15.5px;color:#000;font-weight:normal;font-family:'Liberation Serif', serif;letter-spacing:0.060px;">“Чи сайн байна” гэж магтах</div>
<div class="t" style="left:262.3px;top:402.12px;font-size:15.5px;color:#000;font-weight:normal;font-family:'Liberation Serif', serif;letter-spacing:0.060px;">3</div>
<div class="t" style="left:322.5px;top:402.12px;font-size:15.5px;color:#000;font-weight:normal;font-family:'Liberation Serif', serif;letter-spacing:0.060px;">Гар хөлийн мэдрэмж</div>
<div class="t" style="left:322.5px;top:419.72px;font-size:15.5px;color:#000;font-weight:normal;font-family:'Liberation Serif', serif;letter-spacing:0.060px;">нэмэгдүүлэх</div>
<div class="t" style="left:546.5px;top:402.12px;font-size:15.5px;color:#000;font-weight:normal;font-family:'Liberation Serif', serif;letter-spacing:0.060px;">Хөвөн бөмбөлөгөөр илэх, халуун-</div>
<div class="t" style="left:546.5px;top:419.72px;font-size:15.5px;color:#000;font-weight:normal;font-family:'Liberation Serif', serif;letter-spacing:0.060px;">хүйтэн ялгах</div>
<div class="t" style="left:824.5px;top:402.12px;font-size:15.5px;color:#000;font-weight:normal;font-family:'Liberation Serif', serif;letter-spacing:0.060px;">Инээмсэглэж хамт тоглох</div>
<div class="t" style="left:262.3px;top:437.12px;font-size:15.5px;color:#000;font-weight:normal;font-family:'Liberation Serif', serif;letter-spacing:0.060px;">4</div>
<div class="t" style="left:322.5px;top:437.12px;font-size:15.5px;color:#000;font-weight:normal;font-family:'Liberation Serif', serif;letter-spacing:0.060px;">Хөдөлгөөний хэмнэл</div>
<div class="t" style="left:546.5px;top:437.12px;font-size:15.5px;color:#000;font-weight:normal;font-family:'Liberation Serif', serif;letter-spacing:0.060px;">Хөгжимтэй гар, хөл хөдөлгөх</div>
<div class="t" style="left:824.5px;top:437.12px;font-size:15.5px;color:#000;font-weight:normal;font-family:'Liberation Serif', serif;letter-spacing:0.060px;">Хүүхдийн дуртай дуугаар хамт бүжиглэх</div>
<div class="t" style="left:262.3px;top:455.12px;font-size:15.5px;color:#000;font-weight:normal;font-family:'Liberation Serif', serif;letter-spacing:0.060px;">5</div>
<div class="t" style="left:322.5px;top:455.12px;font-size:15.5px;color:#000;font-weight:normal;font-family:'Liberation Serif', serif;letter-spacing:0.060px;">Тэнцвэр сайжруулах</div>
<div class="t" style="left:546.5px;top:455.12px;font-size:15.5px;color:#000;font-weight:normal;font-family:'Liberation Serif', serif;letter-spacing:0.060px;">Зөөлөн бөмбөг дээр суулгах, урагш</div>
<div class="t" style="left:546.5px;top:472.72px;font-size:15.5px;color:#000;font-weight:normal;font-family:'Liberation Serif', serif;letter-spacing:0.060px;">хазайх</div>
<div class="t" style="left:824.5px;top:455.12px;font-size:15.5px;color:#000;font-weight:normal;font-family:'Liberation Serif', serif;letter-spacing:0.060px;">Тэвэрч дэмжих</div>
<div class="t" style="left:262.3px;top:490.12px;font-size:15.5px;color:#000;font-weight:normal;font-family:'Liberation Serif', serif;letter-spacing:0.060px;">6</div>
<div class="t" style="left:322.5px;top:490.12px;font-size:15.5px;color:#000;font-weight:normal;font-family:'Liberation Serif', serif;letter-spacing:0.060px;">Биеийн халаалт</div>
<div class="t" style="left:546.5px;top:490.12px;font-size:15.5px;color:#000;font-weight:normal;font-family:'Liberation Serif', serif;letter-spacing:0.060px;">Бөмбөг өнхрүүлэх, дэрэн дээгүүр</div>
<div class="t" style="left:546.5px;top:507.72px;font-size:15.5px;color:#000;font-weight:normal;font-family:'Liberation Serif', serif;letter-spacing:0.060px;">мөлхөх</div>
<div class="t" style="left:824.5px;top:490.12px;font-size:15.5px;color:#000;font-weight:normal;font-family:'Liberation Serif', serif;letter-spacing:0.060px;">“Бид хамтдаа чадна” гэж урам өгөх</div>
<div class="t" style="left:262.3px;top:525.12px;font-size:15.5px;color:#000;font-weight:normal;font-family:'Liberation Serif', serif;letter-spacing:0.060px;">7</div>
<div class="t" style="left:322.5px;top:525.12px;font-size:15.5px;color:#000;font-weight:normal;font-family:'Liberation Serif', serif;letter-spacing:0.060px;">Дадлага бататгах</div>
<div class="t" style="left:546.5px;top:525.12px;font-size:15.5px;color:#000;font-weight:normal;font-family:'Liberation Serif', serif;letter-spacing:0.060px;">Өмнөх дасгалуудыг давтах</div>
<div class="t" style="left:824.5px;top:525.12px;font-size:15.5px;color:#000;font-weight:normal;font-family:'Liberation Serif', serif;letter-spacing:0.060px;">Зураг нааж магтах</div>
<div class="a" style="left:253px;top:579px;width:864px;height:18px;background:#d9ead3"></div>
<div class="a" style="left:253px;top:579px;width:865px;height:1px;background:#000"></div>
<div class="a" style="left:253px;top:597px;width:865px;height:1px;background:#000"></div>
<div class="a" style="left:253px;top:615px;width:865px;height:1px;background:#000"></div>
<div class="a" style="left:253px;top:633px;width:865px;height:1px;background:#000"></div>
<div class="a" style="left:253px;top:651px;width:865px;height:1px;background:#000"></div>
<div class="a" style="left:253px;top:668px;width:865px;height:1px;background:#000"></div>
<div class="a" style="left:253px;top:686px;width:865px;height:1px;background:#000"></div>
<div class="a" style="left:253px;top:704px;width:865px;height:1px;background:#000"></div>
<div class="a" style="left:253px;top:579px;width:1px;height:128px;background:#000"></div>
<div class="a" style="left:314px;top:579px;width:1px;height:128px;background:#000"></div>
<div class="a" style="left:538px;top:579px;width:1px;height:128px;background:#000"></div>
<div class="a" style="left:804px;top:579px;width:1px;height:128px;background:#000"></div>
<div class="a" style="left:1117px;top:579px;width:1px;height:128px;background:#000"></div>
<div class="t" style="left:262.3px;top:580.92px;font-size:15.5px;color:#000;font-weight:bold;font-family:'Liberation Serif', serif;letter-spacing:0.050px;">Өдөр</div>
<div class="t" style="left:322.5px;top:580.92px;font-size:15.5px;color:#000;font-weight:bold;font-family:'Liberation Serif', serif;letter-spacing:0.050px;">Зорилго</div>
<div class="t" style="left:546.5px;top:580.92px;font-size:15.5px;color:#000;font-weight:bold;font-family:'Liberation Serif', serif;letter-spacing:0.050px;">Үйл ажиллагаа / Дасгал</div>
<div class="t" style="left:812.5px;top:580.92px;font-size:15.5px;color:#000;font-weight:bold;font-family:'Liberation Serif', serif;letter-spacing:0.050px;">Сэтгэл зүйн дэмжлэг</div>
<div class="t" style="left:262.3px;top:599.12px;font-size:15.5px;color:#000;font-weight:normal;font-family:'Liberation Serif', serif;letter-spacing:0.060px;">8</div>
<div class="t" style="left:322.5px;top:599.12px;font-size:15.5px;color:#000;font-weight:normal;font-family:'Liberation Serif', serif;letter-spacing:0.060px;">Гар хөлийн хөдөлгөөн</div>
<div class="t" style="left:546.5px;top:599.12px;font-size:15.5px;color:#000;font-weight:normal;font-family:'Liberation Serif', serif;letter-spacing:0.060px;">Бөмбөгийг өнхрүүлэх, барих</div>
<div class="t" style="left:812.5px;top:599.12px;font-size:15.5px;color:#000;font-weight:normal;font-family:'Liberation Serif', serif;letter-spacing:0.060px;">“Чи чадлаа!” гэж магтах</div>
<div class="t" style="left:262.3px;top:617.12px;font-size:15.5px;color:#000;font-weight:normal;font-family:'Liberation Serif', serif;letter-spacing:0.060px;">9</div>
<div class="t" style="left:322.5px;top:617.12px;font-size:15.5px;color:#000;font-weight:normal;font-family:'Liberation Serif', serif;letter-spacing:0.060px;">Гар нүдний уялдаа</div>
<div class="t" style="left:546.5px;top:617.12px;font-size:15.5px;color:#000;font-weight:normal;font-family:'Liberation Serif', serif;letter-spacing:0.060px;">Блокоор барилга босгох</div>
<div class="t" style="left:812.5px;top:617.12px;font-size:15.5px;color:#000;font-weight:normal;font-family:'Liberation Serif', serif;letter-spacing:0.060px;">“Өндөр байшин босголоо!”</div>
<div class="t" style="left:262.3px;top:635.12px;font-size:15.5px;color:#000;font-weight:normal;font-family:'Liberation Serif', serif;letter-spacing:0.060px;">10</div>
<div class="t" style="left:322.5px;top:635.12px;font-size:15.5px;color:#000;font-weight:normal;font-family:'Liberation Serif', serif;letter-spacing:0.060px;">Гар булчин хөгжүүлэх</div>
<div class="t" style="left:546.5px;top:635.12px;font-size:15.5px;color:#000;font-weight:normal;font-family:'Liberation Serif', serif;letter-spacing:0.060px;">Усыг саванд хийх, асгах</div>
<div class="t" style="left:812.5px;top:635.12px;font-size:15.5px;color:#000;font-weight:normal;font-family:'Liberation Serif', serif;letter-spacing:0.060px;">Хамт цэвэрлэх</div>
<div class="t" style="left:262.3px;top:653.12px;font-size:15.5px;color:#000;font-weight:normal;font-family:'Liberation Serif', serif;letter-spacing:0.060px;">11</div>
<div class="t" style="left:322.5px;top:653.12px;font-size:15.5px;color:#000;font-weight:normal;font-family:'Liberation Serif', serif;letter-spacing:0.060px;">Атгах чадвар</div>
<div class="t" style="left:546.5px;top:653.12px;font-size:15.5px;color:#000;font-weight:normal;font-family:'Liberation Serif', serif;letter-spacing:0.060px;">Элс, будаа атгах</div>
<div class="t" style="left:812.5px;top:653.12px;font-size:15.5px;color:#000;font-weight:normal;font-family:'Liberation Serif', serif;letter-spacing:0.060px;">Хөдөлгөөнийг урамшуулах</div>
<div class="t" style="left:262.3px;top:670.12px;font-size:15.5px;color:#000;font-weight:normal;font-family:'Liberation Serif', serif;letter-spacing:0.060px;">12</div>
<div class="t" style="left:322.5px;top:670.12px;font-size:15.5px;color:#000;font-weight:normal;font-family:'Liberation Serif', serif;letter-spacing:0.060px;">Чиглэл ойлгох</div>
<div class="t" style="left:546.5px;top:670.12px;font-size:15.5px;color:#000;font-weight:normal;font-family:'Liberation Serif', serif;letter-spacing:0.060px;">“Өг, ав” тоглоом</div>
<div class="t" style="left:812.5px;top:670.12px;font-size:15.5px;color:#000;font-weight:normal;font-family:'Liberation Serif', serif;letter-spacing:0.060px;">Инээмсэглэл, толгой илэх</div>
<div class="t" style="left:262.3px;top:688.12px;font-size:15.5px;color:#000;font-weight:normal;font-family:'Liberation Serif', serif;letter-spacing:0.060px;">13</div>
<div class="t" style="left:322.5px;top:688.12px;font-size:15.5px;color:#000;font-weight:normal;font-family:'Liberation Serif', serif;letter-spacing:0.060px;">Хөдөлгөөн хослуулах</div>
<div class="t" style="left:546.5px;top:688.12px;font-size:15.5px;color:#000;font-weight:normal;font-family:'Liberation Serif', serif;letter-spacing:0.060px;">Хоёр гараар зэрэг хөдөлгөөн хийх</div>
<div class="t" style="left:812.5px;top:688.12px;font-size:15.5px;color:#000;font-weight:normal;font-family:'Liberation Serif', serif;letter-spacing:0.060px;">Дуу аялан хэмнэлээр дасгал хийх</div>
<div class="a" style="left:4px;top:207px;width:13px;height:500px;background:#fff"></div>
<svg style="left:0;top:0" width="30" height="708" viewBox="0 0 30 708"><rect x="10.5" y="218" width="2" height="1" fill="#444"/><rect x="10.5" y="230" width="2" height="1" fill="#444"/><rect x="10.5" y="242" width="2" height="1" fill="#444"/><rect x="8.5" y="254" width="5" height="1" fill="#444"/><rect x="10.5" y="266" width="2" height="1" fill="#444"/><rect x="10.5" y="278" width="2" height="1" fill="#444"/><rect x="10.5" y="290" width="2" height="1" fill="#444"/><text x="0" y="0" font-size="10" fill="#333" text-anchor="middle" font-family="Liberation Sans" transform="translate(14.2,302) rotate(-90)">1</text><rect x="10.5" y="314" width="2" height="1" fill="#444"/><rect x="10.5" y="326" width="2" height="1" fill="#444"/><rect x="10.5" y="338" width="2" height="1" fill="#444"/><rect x="8.5" y="350" width="5" height="1" fill="#444"/><rect x="10.5" y="362" width="2" height="1" fill="#444"/><rect x="10.5" y="374" width="2" height="1" fill="#444"/><rect x="10.5" y="386" width="2" height="1" fill="#444"/><text x="0" y="0" font-size="10" fill="#333" text-anchor="middle" font-family="Liberation Sans" transform="translate(14.2,398) rotate(-90)">2</text><rect x="10.5" y="410" width="2" height="1" fill="#444"/><rect x="10.5" y="422" width="2" height="1" fill="#444"/><rect x="10.5" y="434" width="2" height="1" fill="#444"/><rect x="8.5" y="446" width="5" height="1" fill="#444"/><rect x="10.5" y="458" width="2" height="1" fill="#444"/><rect x="10.5" y="470" width="2" height="1" fill="#444"/><rect x="10.5" y="482" width="2" height="1" fill="#444"/><text x="0" y="0" font-size="10" fill="#333" text-anchor="middle" font-family="Liberation Sans" transform="translate(14.2,494) rotate(-90)">3</text><rect x="10.5" y="506" width="2" height="1" fill="#444"/><rect x="10.5" y="518" width="2" height="1" fill="#444"/><rect x="10.5" y="530" width="2" height="1" fill="#444"/><rect x="8.5" y="542" width="5" height="1" fill="#444"/><rect x="10.5" y="554" width="2" height="1" fill="#444"/><rect x="10.5" y="566" width="2" height="1" fill="#444"/><rect x="10.5" y="578" width="2" height="1" fill="#444"/><text x="0" y="0" font-size="10" fill="#333" text-anchor="middle" font-family="Liberation Sans" transform="translate(14.2,590) rotate(-90)">4</text><rect x="10.5" y="602" width="2" height="1" fill="#444"/><rect x="10.5" y="614" width="2" height="1" fill="#444"/><rect x="10.5" y="626" width="2" height="1" fill="#444"/><rect x="8.5" y="638" width="5" height="1" fill="#444"/><rect x="10.5" y="650" width="2" height="1" fill="#444"/><rect x="10.5" y="662" width="2" height="1" fill="#444"/><rect x="10.5" y="674" width="2" height="1" fill="#444"/><text x="0" y="0" font-size="10" fill="#333" text-anchor="middle" font-family="Liberation Sans" transform="translate(14.2,686) rotate(-90)">5</text><rect x="10.5" y="698" width="2" height="1" fill="#444"/></svg>
<div class="a" style="left:1349px;top:202px;width:17px;height:505px;background:#f5f5f5"></div>
<svg style="left:1352px;top:206px" width="11" height="9" viewBox="0 0 11 9"><path d="M1 7.5 L5.5 1 L10 7.5 Z" fill="#707070" stroke="#707070" stroke-width="1" stroke-linejoin="round"/></svg>
<div class="a" style="left:1353px;top:219px;width:9px;height:36px;background:#707070;border-radius:4.5px"></div>
<svg style="left:1352px;top:693px" width="11" height="9" viewBox="0 0 11 9"><path d="M1 1.5 L5.5 8 L10 1.5 Z" fill="#707070" stroke="#707070" stroke-width="1" stroke-linejoin="round"/></svg>
<div class="a" style="left:0;top:706px;width:1366px;height:1px;background:#fbfbfb"></div>
<div class="a" style="left:0;top:707px;width:1366px;height:21px;background:#f3f3f3"></div>
<div class="a" style="left:0;top:727px;width:1366px;height:1px;background:#fdfdfd"></div>
<div class="t" style="left:11.4px;top:711.77px;font-size:11.5px;color:#3b3b3b;font-weight:normal;font-family:'Liberation Sans', sans-serif;letter-spacing:-0.238px;">Page 1 of 10</div>
<div class="t" style="left:95.3px;top:711.77px;font-size:11.5px;color:#3b3b3b;font-weight:normal;font-family:'Liberation Sans', sans-serif;letter-spacing:-0.262px;">1362 words</div>
<div class="t" style="left:172.6px;top:711.77px;font-size:11.5px;color:#3b3b3b;font-weight:normal;font-family:'Liberation Sans', sans-serif;letter-spacing:-0.155px;">English (United States)</div>
<svg style="left:306px;top:709px" width="17" height="16" viewBox="0 0 17 16"><circle cx="7.5" cy="2.5" r="1.8" stroke="#333" stroke-width="1" fill="none"/><path d="M1 5.5 Q7.5 7 14 5.5 M7.5 6.5 V9 L4 14.5 M7.5 9 L9 11" stroke="#333" stroke-width="1.1" fill="none"/><path d="M10 10 L15 15 M15 10 L10 15" stroke="#333" stroke-width="1.1"/></svg>
<div class="t" style="left:325.4px;top:711.77px;font-size:11.5px;color:#262626;font-weight:normal;font-family:'Liberation Sans', sans-serif;letter-spacing:0.023px;-webkit-text-stroke:0.35px currentColor;">Accessibility: Investigate</div>
<svg style="left:1006px;top:710px" width="16" height="14" viewBox="0 0 16 14"><path d="M0.5 3.5 V0.5 H3.5 M12 0.5 H15 V3.5 M15 10 V13 H12 M3.5 13 H0.5 V10" stroke="#333" stroke-width="1" fill="none"/><path d="M4 1.5 H9 L12 4.5 V11.5 H4 Z M9 1.5 V4.5 H12" stroke="#333" stroke-width="1" fill="none"/></svg>
<div class="t" style="left:1024.5px;top:711.77px;font-size:11.5px;color:#3b3b3b;font-weight:normal;font-family:'Liberation Sans', sans-serif;letter-spacing:-0.554px;">Focus</div>
<svg style="left:1078px;top:710px" width="15" height="13" viewBox="0 0 15 13"><path d="M7 1.5 Q4 0.5 0.5 0.5 V12 Q4 12 7 12.5 Q10 12 13.5 12 V0.5 Q10 0.5 7 1.5 Z M7 1.5 V12.5" stroke="#333" stroke-width="1" fill="none"/><path d="M2.5 3.5 H5 M2.5 6 H5 M2.5 8.5 H5 M9 3.5 H11.5 M9 6 H11.5 M9 8.5 H11.5" stroke="#333" stroke-width="1"/></svg>
<div class="a" style="left:1106px;top:707px;width:40px;height:21px;background:#dedede"></div>
<svg style="left:0px;top:0px" width="1366" height="768" viewBox="0 0 1366 768"><rect x="1120.7" y="710.8" width="9.8" height="12.6" stroke="#222" stroke-width="1.05" fill="#fff"/><path d="M1122.3 712.5 H1129.1 M1122.3 714.5 H1129.1 M1122.3 716.5 H1129.1 M1122.3 718.5 H1129.1 M1122.3 720.5 H1129.1" stroke="#222" stroke-width="0.8"/></svg>
<svg style="left:1158px;top:709px" width="17" height="16" viewBox="0 0 17 16"><path d="M9 13.5 H0.5 V0.5 H12 V6" stroke="#333" stroke-width="1" fill="none"/><path d="M2.5 3.5 H10 M2.5 5.5 H9 M2.5 7.5 H6 M2.5 9.5 H6" stroke="#333" stroke-width="0.9"/><circle cx="11.5" cy="11" r="4" stroke="#333" stroke-width="1.1" fill="#f3f3f3"/><path d="M7.5 11 H15.5 M11.5 7 Q9.5 11 11.5 15 Q13.5 11 11.5 7" stroke="#333" stroke-width="0.9" fill="none"/></svg>
<div class="a" style="left:1192px;top:716px;width:8px;height:1px;background:#444"></div>
<div class="a" style="left:1205px;top:717px;width:100px;height:1px;background:#777"></div>
<div class="a" style="left:1252px;top:712px;width:4px;height:10px;background:#555"></div>
<div class="a" style="left:1309px;top:716px;width:9px;height:1px;background:#444"></div>
<div class="a" style="left:1313px;top:712px;width:1px;height:9px;background:#444"></div>
<div class="t" style="left:1331.7px;top:711.77px;font-size:11.5px;color:#3b3b3b;font-weight:normal;font-family:'Liberation Sans', sans-serif;letter-spacing:-1.038px;">100%</div>
<div class="a" style="left:0;top:728px;width:1366px;height:40px;background:linear-gradient(90deg,#213b45 0%,#203844 30%,#1e3242 55%,#1c2b44 80%,#1b2846 100%)"></div>
<svg style="left:15px;top:739px" width="18" height="18" viewBox="0 0 18 18"><path d="M1 3 L7.3 2 V8.2 H1 Z M8.6 1.8 L17 0.6 V8.2 H8.6 Z M1 9.6 H7.3 V15.8 L1 14.9 Z M8.6 9.6 H17 V17.4 L8.6 16.1 Z" fill="#fff"/></svg>
<div class="a" style="left:48px;top:728px;width:288px;height:40px;background:#f2f2f2;border-top:1px solid #d9d9d9"></div>
<svg style="left:59px;top:739px" width="17" height="18" viewBox="0 0 17 18"><circle cx="11" cy="6.5" r="5.3" stroke="#111" stroke-width="1.3" fill="none"/><path d="M7.2 10.3 L1 16.5" stroke="#111" stroke-width="1.4"/></svg>
<div class="t" style="left:88.5px;top:741.73px;font-size:14.5px;color:#222;font-weight:normal;font-family:'Liberation Sans', sans-serif;letter-spacing:-0.009px;">Type here to search</div>
<svg style="left:351px;top:739px" width="18" height="18" viewBox="0 0 18 18"><circle cx="9" cy="9" r="6.6" stroke="#fff" stroke-width="1.6" fill="none"/></svg>
<svg style="left:399px;top:739px" width="18" height="17" viewBox="0 0 18 17"><path d="M0.5 0.5 H11.5 M0.5 15.5 H11.5 M2.5 3.5 H9.5 V12.5 H2.5 Z M0.5 0 V2 M11.5 0 V2 M0.5 14 V16 M11.5 14 V16" stroke="#fff" stroke-width="1.1" fill="none"/><rect x="14" y="4.5" width="2.2" height="2.2" fill="#fff"/><path d="M15.1 0 V3 M15.1 8 V16" stroke="#fff" stroke-width="1.1"/></svg>
<svg style="left:445px;top:736px" width="25" height="25" viewBox="0 0 25 25"><circle cx="12.5" cy="12" r="11.8" fill="#1877f2"/><path d="M14.2 24 V15.3 H17 L17.4 12 H14.2 V10 Q14.2 8.3 16 8.3 H17.5 V5.4 Q16.5 5.2 15.2 5.2 Q10.8 5.2 10.8 9.6 V12 H8 V15.3 H10.8 V24 Z" fill="#fff"/></svg>
<div class="a" style="left:439px;top:766px;width:38px;height:2px;background:#76b9ed"></div>
<svg style="left:492px;top:736px" width="26" height="25" viewBox="0 0 26 25"><defs><linearGradient id="eg1" x1="0" y1="0" x2="1" y2="1"><stop offset="0" stop-color="#35c1f1"/><stop offset="0.6" stop-color="#2eb0a8"/><stop offset="1" stop-color="#7fd64a"/></linearGradient><linearGradient id="eg2" x1="0" y1="0" x2="0" y2="1"><stop offset="0" stop-color="#1b74c9"/><stop offset="1" stop-color="#0c59a4"/></linearGradient></defs><path d="M1 12 Q1 1 12.5 1 Q24.5 1 24.5 12.5 Q24.5 17 20 17 H12 Q8.5 17 9 13.5 Q9.5 10.5 13 10.5 Q8 7 4 10 Q1.5 12 1 12 Z" fill="url(#eg1)"/><path d="M1 12 Q0.5 23.5 12.5 24 Q18 24 21.5 20 Q16 22 12 19.5 Q8.5 17 9 13.5 Q9.5 10.5 13 10.5 Q8 7 4 10 Q1.5 12 1 12 Z" fill="url(#eg2)"/></svg>
<div class="a" style="left:486px;top:766px;width:38px;height:2px;background:#76b9ed"></div>
<svg style="left:540px;top:738px" width="23" height="19" viewBox="0 0 23 19"><path d="M0.5 1.5 Q0.5 0.5 1.5 0.5 H8 L10 2.5 H21.5 Q22.5 2.5 22.5 3.5 V18 H0.5 Z" fill="#f3c04a"/><path d="M0.5 4.5 H22.5 V18 H0.5 Z" fill="#fbd86a"/><path d="M0.5 1.5 Q0.5 0.5 1.5 0.5 H8 L10 2.5 H9 Q8 4 6 4 H0.5 Z" fill="#e8a825"/><path d="M5 18.5 V11 Q5 10 6 10 H17 Q18 10 18 11 V18.5 H15 V14 H8 V18.5 Z" fill="#3a8bd8"/></svg>
<div class="a" style="left:533px;top:766px;width:38px;height:2px;background:#76b9ed"></div>
<svg style="left:586px;top:735px" width="25" height="25" viewBox="0 0 25 25"><path d="M8.5 7 V4.5 Q8.5 1 12.3 1 Q16 1 16 4.5 V7" stroke="#fff" stroke-width="1.4" fill="none"/><path d="M10.5 7 V5 Q10.5 2.5 12.3 2.5 Q14 2.5 14 5" stroke="#fff" stroke-width="1" fill="none"/><path d="M1 7.5 H23.5 V22.5 Q23.5 24 22 24 H2.5 Q1 24 1 22.5 Z" fill="#fff"/><rect x="6.8" y="10.2" width="5" height="5" fill="#f25022"/><rect x="12.7" y="10.2" width="5" height="5" fill="#7fba00"/><rect x="6.8" y="16" width="5" height="5" fill="#00a4ef"/><rect x="12.7" y="16" width="5" height="5" fill="#ffb900"/></svg>
<svg style="left:633px;top:737px" width="26" height="21" viewBox="0 0 26 21"><path d="M0.5 6.5 L12.5 0.5 L24.5 6.5 V20 H0.5 Z" fill="#fff"/><path d="M0.5 7 L12.5 7.5 L24.5 7 L12.5 15 L18 15.5 Q8 11 0.5 7 Z" fill="#1f3442"/><path d="M24.5 7 L9 10.5 L18 15.5 Z" fill="#1f3442"/></svg>
<svg style="left:684.5px;top:737px" width="17" height="22" viewBox="0 0 17 22"><path d="M0.5 0.5 H11.5 L16 5 V21 H0.5 Z" fill="#f4f4f4"/><path d="M11.5 0.5 V5 H16 Z" fill="#cfcfcf"/></svg>
<svg style="left:824.5px;top:737px" width="17" height="22" viewBox="0 0 17 22"><path d="M0.5 0.5 H11.5 L16 5 V21 H0.5 Z" fill="#f4f4f4"/><path d="M11.5 0.5 V5 H16 Z" fill="#cfcfcf"/></svg>
<svg style="left:728px;top:736px" width="25" height="25" viewBox="0 0 25 25"><defs><radialGradient id="ig" cx="0.25" cy="1.05" r="1.2"><stop offset="0" stop-color="#fdd663"/><stop offset="0.25" stop-color="#f77737"/><stop offset="0.5" stop-color="#e1306c"/><stop offset="0.75" stop-color="#c13584"/><stop offset="1" stop-color="#5b51d8"/></radialGradient></defs><rect x="0" y="0" width="24.5" height="24.5" rx="6" fill="url(#ig)"/><rect x="4" y="4" width="16.5" height="16.5" rx="4.5" stroke="#fff" stroke-width="1.8" fill="none"/><circle cx="12.25" cy="12.25" r="4" stroke="#fff" stroke-width="1.8" fill="none"/><circle cx="17" cy="7.6" r="1.1" fill="#fff"/></svg>
<svg style="left:775px;top:736px" width="25" height="25" viewBox="0 0 25 25"><circle cx="12.3" cy="12.3" r="12" fill="#db4437"/><path d="M12.3 12.3 L1.9 6.3 A12 12 0 0 0 12.3 24.3 Z" fill="#0f9d58"/><path d="M12.3 12.3 L12.3 24.3 A12 12 0 0 0 22.7 6.3 Z" fill="#f4b400"/><path d="M12.3 6.8 H22.7 A12 12 0 0 0 1.9 6.3 L7.5 15 Z" fill="#db4437"/><path d="M12.3 12.3 L7.5 15 L12.3 24.3 Z" fill="#0f9d58"/><circle cx="12.3" cy="12.3" r="5.5" fill="#fff"/><circle cx="12.3" cy="12.3" r="4.3" fill="#4285f4"/></svg>
<div class="a" style="left:768px;top:766px;width:38px;height:2px;background:#76b9ed"></div>
<svg style="left:866px;top:735px" width="26" height="26" viewBox="0 0 26 26"><defs><radialGradient id="ff" cx="0.7" cy="0.2" r="0.9"><stop offset="0" stop-color="#fff44f"/><stop offset="0.35" stop-color="#ff9a20"/><stop offset="0.7" stop-color="#ff3750"/><stop offset="1" stop-color="#d41a7a"/></radialGradient></defs><path d="M13 25 Q2 25 1.5 14 Q1.5 9 4 6 Q4 9 6 10 Q7 5 12 3 Q11 6 14 6.5 Q16 2 14.5 0.5 Q24 4 24.5 13.5 Q24.5 25 13 25 Z" fill="url(#ff)"/><circle cx="12.5" cy="14.5" r="5.5" fill="#7b3fd0"/><path d="M7 12 Q10 10.5 14 12.5 Q11 9 7.5 10 Z" fill="#ff8a2a"/></svg>
<svg style="left:914px;top:737px" width="22" height="22" viewBox="0 0 22 22"><rect x="0" y="0" width="21.5" height="21.5" rx="5" fill="#fff"/><path d="M4.5 15.5 V6.5 L10.75 12 L17 6.5 V15.5" stroke="#2a6fd0" stroke-width="2.2" fill="none" stroke-linejoin="round"/><path d="M4 17 L7 16 M17.5 17 L14.5 16 M9.5 17 H12" stroke="#f0a030" stroke-width="1"/></svg>
<div class="a" style="left:907px;top:766px;width:37px;height:2px;background:#76b9ed"></div>
<div class="a" style="left:949px;top:728px;width:45px;height:40px;background:#4a5966"></div>
<svg style="left:958px;top:737px" width="26" height="22" viewBox="0 0 26 22"><rect x="6" y="0" width="18" height="21" rx="0.5" fill="#41a5ee"/><rect x="6" y="5.3" width="18" height="5.2" fill="#2b7cd3"/><rect x="6" y="10.5" width="18" height="5.2" fill="#185abd"/><rect x="6" y="15.7" width="18" height="5.3" fill="#103f91"/><rect x="0" y="5" width="12.5" height="12.5" rx="0.5" fill="#185abd"/><path d="M2.2 7.8 L4 15 L6.2 10 L8.4 15 L10.3 7.8" stroke="#fff" stroke-width="1.5" fill="none"/></svg>
<div class="a" style="left:949px;top:766px;width:45px;height:2px;background:#76b9ed"></div>
<svg style="left:1029px;top:736px" width="26" height="24" viewBox="0 0 26 24"><defs><linearGradient id="wg" x1="0.2" y1="0.1" x2="0.8" y2="0.9"><stop offset="0" stop-color="#f9c623"/><stop offset="1" stop-color="#f06a1c"/></linearGradient></defs><circle cx="10.8" cy="11.7" r="10.2" fill="url(#wg)"/><circle cx="17" cy="6" r="5.8" fill="#d22a2a"/><text x="17" y="9.3" font-size="8.5" fill="#fff" text-anchor="middle" font-family="Liberation Sans">1</text></svg>
<div class="t" style="left:1060.2px;top:742.02px;font-size:13.8px;color:#fff;font-weight:normal;font-family:'Liberation Sans', sans-serif;letter-spacing:0.000px;">5°C</div>
<svg style="left:1098px;top:743px" width="14" height="9" viewBox="0 0 14 9"><path d="M1 8 L7 1.5 L13 8" stroke="#fff" stroke-width="1.3" fill="none"/></svg>
<svg style="left:1121px;top:743px" width="17" height="11" viewBox="0 0 17 11"><rect x="0.8" y="0.8" width="13.5" height="9" stroke="#fff" stroke-width="1.2" fill="none"/><rect x="2.6" y="2.6" width="7" height="5.4" fill="#fff"/><rect x="14.5" y="3.2" width="1.8" height="4" fill="#fff"/></svg>
<svg style="left:1145px;top:741px" width="17" height="15" viewBox="0 0 17 15"><path d="M4.5 2 H16 V11.5 H4.5" stroke="#fff" stroke-width="1.1" fill="none"/><path d="M10 11.5 V13.8 M7 14 H13" stroke="#fff" stroke-width="1.1"/><rect x="0.6" y="0.6" width="4" height="4" stroke="#fff" stroke-width="1" fill="none"/><path d="M2.6 4.6 V14.5" stroke="#fff" stroke-width="1.1"/></svg>
<svg style="left:1170px;top:740px" width="15" height="17" viewBox="0 0 15 17"><path d="M2.5 3 Q7 0 11.5 3 M2.5 14 Q7 17 11.5 14" stroke="#fff" stroke-width="1" fill="none"/><rect x="0.8" y="5.3" width="8.5" height="6.5" rx="1.5" stroke="#fff" stroke-width="1.1" fill="none"/><path d="M9.5 7.5 L13.5 5.5 V11.5 L9.5 9.5" stroke="#fff" stroke-width="1.1" fill="none"/></svg>
<svg style="left:1192px;top:740px" width="18" height="15" viewBox="0 0 18 15"><path d="M0.8 5 H3.5 L7.5 1 V14 L3.5 10 H0.8 Z" stroke="#fff" stroke-width="1.1" fill="none"/><path d="M10 5 Q11.5 7.5 10 10 M12.5 3 Q15 7.5 12.5 12 M15 1 Q18.5 7.5 15 14" stroke="#fff" stroke-width="1.1" fill="none"/></svg>
<div class="t" style="left:1216.4px;top:741.22px;font-size:12.5px;color:#fff;font-weight:normal;font-family:'Liberation Sans', sans-serif;letter-spacing:-0.381px;">МОН</div>
<div class="t" style="left:1260.6px;top:732.52px;font-size:12.5px;color:#fff;font-weight:normal;font-family:'Liberation Sans', sans-serif;letter-spacing:-0.875px;">5:12 PM</div>
<div class="t" style="left:1253.1px;top:750.22px;font-size:12.5px;color:#fff;font-weight:normal;font-family:'Liberation Sans', sans-serif;letter-spacing:-0.651px;">10/22/2025</div>
<svg style="left:1324px;top:739px" width="26" height="26" viewBox="0 0 26 26"><path d="M1 1 H17 V13 H7 L3.5 16.5 V13 H1 Z" fill="#fff"/><path d="M4 4.5 H14 M4 7 H14 M4 9.5 H11" stroke="#1b2846" stroke-width="1.1"/><circle cx="16" cy="16.4" r="8.2" fill="#2e3033" stroke="#5a5a5a" stroke-width="1"/><text x="16" y="20.4" font-size="11" fill="#fff" text-anchor="middle" font-family="Liberation Sans">2</text></svg>
<div class="a" style="left:1361px;top:728px;width:1px;height:40px;background:#596577"></div>
</body></html>
